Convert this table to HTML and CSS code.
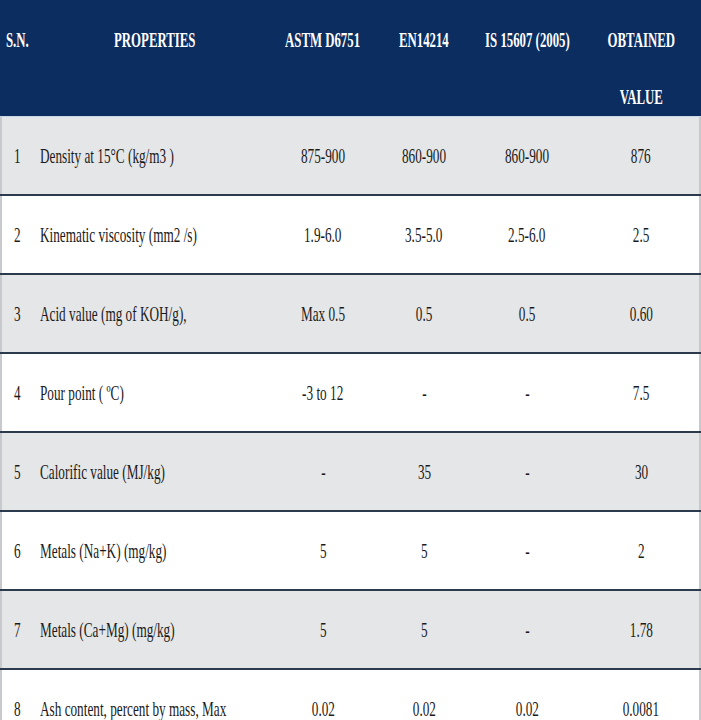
FILE: index.html
```html
<!DOCTYPE html>
<html lang="en">
<head>
<meta charset="utf-8">
<title>Biodiesel properties</title>
<link rel="stylesheet" href="styles.css">
</head>
<body>
<div class="table">
  <div class="row head">
    <div class="cell sn"><span class="t">S.N.</span></div>
    <div class="cell c"><span class="t">PROPERTIES</span></div>
    <div class="cell c"><span class="t">ASTM D6751</span></div>
    <div class="cell c"><span class="t">EN14214</span></div>
    <div class="cell c"><span class="t">IS 15607 (2005)</span></div>
    <div class="cell c last"><span class="t">OBTAINED<br>VALUE</span></div>
  </div>
  <div class="row body odd">
    <div class="cell num"><span class="t">1</span></div>
    <div class="cell prop"><span class="t">Density at 15°C (kg/m3 )</span></div>
    <div class="cell c"><span class="t">875-900</span></div>
    <div class="cell c"><span class="t">860-900</span></div>
    <div class="cell c"><span class="t">860-900</span></div>
    <div class="cell c last"><span class="t">876</span></div>
  </div>
  <div class="row body">
    <div class="cell num"><span class="t">2</span></div>
    <div class="cell prop"><span class="t">Kinematic viscosity (mm2 /s)</span></div>
    <div class="cell c"><span class="t">1.9-6.0</span></div>
    <div class="cell c"><span class="t">3.5-5.0</span></div>
    <div class="cell c"><span class="t">2.5-6.0</span></div>
    <div class="cell c last"><span class="t">2.5</span></div>
  </div>
  <div class="row body odd">
    <div class="cell num"><span class="t">3</span></div>
    <div class="cell prop"><span class="t">Acid value (mg of KOH/g),</span></div>
    <div class="cell c"><span class="t">Max 0.5</span></div>
    <div class="cell c"><span class="t">0.5</span></div>
    <div class="cell c"><span class="t">0.5</span></div>
    <div class="cell c last"><span class="t">0.60</span></div>
  </div>
  <div class="row body">
    <div class="cell num"><span class="t">4</span></div>
    <div class="cell prop"><span class="t">Pour point ( ºC)</span></div>
    <div class="cell c"><span class="t">-3 to 12</span></div>
    <div class="cell c"><span class="t">-</span></div>
    <div class="cell c"><span class="t">-</span></div>
    <div class="cell c last"><span class="t">7.5</span></div>
  </div>
  <div class="row body odd">
    <div class="cell num"><span class="t">5</span></div>
    <div class="cell prop"><span class="t">Calorific value (MJ/kg)</span></div>
    <div class="cell c"><span class="t">-</span></div>
    <div class="cell c"><span class="t">35</span></div>
    <div class="cell c"><span class="t">-</span></div>
    <div class="cell c last"><span class="t">30</span></div>
  </div>
  <div class="row body">
    <div class="cell num"><span class="t">6</span></div>
    <div class="cell prop"><span class="t">Metals (Na+K) (mg/kg)</span></div>
    <div class="cell c"><span class="t">5</span></div>
    <div class="cell c"><span class="t">5</span></div>
    <div class="cell c"><span class="t">-</span></div>
    <div class="cell c last"><span class="t">2</span></div>
  </div>
  <div class="row body odd">
    <div class="cell num"><span class="t">7</span></div>
    <div class="cell prop"><span class="t">Metals (Ca+Mg) (mg/kg)</span></div>
    <div class="cell c"><span class="t">5</span></div>
    <div class="cell c"><span class="t">5</span></div>
    <div class="cell c"><span class="t">-</span></div>
    <div class="cell c last"><span class="t">1.78</span></div>
  </div>
  <div class="row body">
    <div class="cell num"><span class="t">8</span></div>
    <div class="cell prop"><span class="t">Ash content, percent by mass, Max</span></div>
    <div class="cell c"><span class="t">0.02</span></div>
    <div class="cell c"><span class="t">0.02</span></div>
    <div class="cell c"><span class="t">0.02</span></div>
    <div class="cell c last"><span class="t">0.0081</span></div>
  </div>
</div>
</body>
</html>
```

FILE: styles.css
```css
html, body {
  margin: 0;
  padding: 0;
  background: #ffffff;
}

body {
  font-family: "Liberation Serif", "Times New Roman", Tinos, serif;
  font-size: 21px;
  color: #1a1a1a;
  overflow: hidden;
}

.table {
  width: 701px;
}

.row {
  display: grid;
  grid-template-columns: 34px 242px 94px 108px 98px 125px;
}

.head {
  height: 117px;
  overflow: hidden;
  background: #0b2d5f;
  color: #ffffff;
  font-weight: bold;
  border-bottom: 1px solid #c9d6e6;
  box-sizing: border-box;
}

.head .cell {
  padding-top: 12px;
  line-height: 57px;
  align-items: flex-start;
}

.body {
  height: 79px;
  box-sizing: border-box;
  border-bottom: 2px solid #2c3a4e;
  align-items: center;
  line-height: 24px;
  box-shadow: inset 2px 0 0 #c8c9cc, inset -2px 0 0 #c8c9cc;
}

.body.odd {
  background: #e5e6e8;
}

.cell {
  white-space: nowrap;
  display: flex;
  min-width: 0;
}

.c,
.num {
  justify-content: center;
  text-align: center;
}

.last {
  padding-left: 5px;
}

.sn,
.prop {
  justify-content: flex-start;
  padding-left: 6px;
}

.t {
  display: block;
  flex: none;
  transform: scaleX(0.63);
  transform-origin: center;
}

.head .t {
  transform: scaleX(0.61);
}

.sn .t,
.prop .t {
  transform-origin: left;
}
```
